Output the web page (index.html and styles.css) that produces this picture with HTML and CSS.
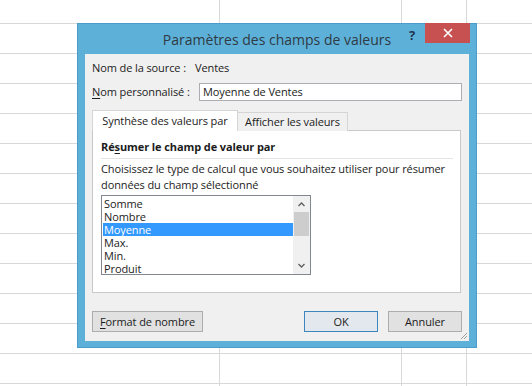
FILE: index.html
```html
<!DOCTYPE html>
<html lang="fr">
<head>
<meta charset="utf-8">
<title>Paramètres des champs de valeurs</title>
<link rel="stylesheet" href="styles.css">
</head>
<body>
<div class="dialog">
  <div class="titlebar">
    <span class="title">Paramètres des champs de valeurs</span>
    <span class="help">?</span>
    <span class="close"><svg width="10" height="10" viewBox="0 0 10 10"><path d="M1 1L9 9M9 1L1 9" stroke="#fff" stroke-width="1.6" fill="none"/></svg></span>
  </div>
  <div class="content">
    <div class="row source"><span class="lbl">Nom de la source :</span><span class="val">Ventes</span></div>
    <div class="row custom"><span class="lbl"><u>N</u>om personnalisé :</span><div class="input">Moyenne de Ventes</div></div>
    <div class="tabs">
      <div class="tab active">Synthèse des valeurs par</div>
      <div class="tab">Afficher les valeurs</div>
    </div>
    <div class="panel">
      <div class="heading">Ré<u>s</u>umer le champ de valeur par</div>
      <p class="desc"><span>Choisissez le type de calcul que vous souhaitez utiliser pour résumer</span><span>données du champ sélectionné</span></p>
      <div class="listbox">
        <ul class="items">
          <li>Somme</li>
          <li>Nombre</li>
          <li class="sel">Moyenne</li>
          <li>Max.</li>
          <li>Min.</li>
          <li>Produit</li>
        </ul>
        <div class="scrollbar">
          <svg class="arrow" width="17" height="16" viewBox="0 0 17 16"><path d="M5.5 10L8.5 7L11.5 10" stroke="#606060" stroke-width="1.4" fill="none"/></svg>
          <div class="thumb"></div>
          <div class="track"></div>
          <svg class="arrow" width="17" height="16" viewBox="0 0 17 16"><path d="M5.5 6L8.5 9L11.5 6" stroke="#606060" stroke-width="1.4" fill="none"/></svg>
        </div>
      </div>
    </div>
    <div class="buttons">
      <button class="btn fmt"><u>F</u>ormat de nombre</button>
      <span class="spacer"></span>
      <button class="btn ok">OK</button>
      <button class="btn cancel">Annuler</button>
    </div>
    <svg class="grip" width="8" height="8" viewBox="0 0 8 8"><path d="M7 1L1 7M7 4L4 7" stroke="#a0a0a0" stroke-width="1" fill="none"/></svg>
  </div>
</div>
</body>
</html>
```

FILE: styles.css
```css
html, body {
  margin: 0;
  padding: 0;
}
body {
  width: 532px;
  height: 386px;
  overflow: hidden;
  background-color: #fff;
  background-image:
    linear-gradient(#d8d8d8, #d8d8d8),
    linear-gradient(#d8d8d8, #d8d8d8),
    linear-gradient(#d8d8d8, #d8d8d8),
    linear-gradient(to bottom, #d8d8d8 0, #d8d8d8 1px, transparent 1px);
  background-size: 1px 100%, 1px 100%, 1px 100%, 100% 30px;
  background-repeat: no-repeat, no-repeat, no-repeat, repeat;
  background-position: 219px 0, 401px 0, 466px 0, 0 23px;
  font-family: "Segoe UI", "Open Sans", "Noto Sans", sans-serif;
  font-size: 11px;
  letter-spacing: -0.1px;
  color: #1b1b1b;
  display: flow-root;
}
u { text-decoration: underline; text-underline-offset: 2px; }

.dialog {
  margin: 23px 0 0 77px;
  width: 400px;
  height: 325px;
  box-sizing: border-box;
  background: #5db1d9;
  border: 1px solid #4a9ccb;
  padding: 0 7px 6px 7px;
  display: flex;
  flex-direction: column;
}
.titlebar {
  height: 30px;
  position: relative;
  display: flex;
  align-items: center;
  justify-content: center;
}
.title {
  font-size: 14px;
  letter-spacing: 0;
  color: #2f3a44;
  margin-top: 1px;
}
.help {
  position: absolute;
  left: 324px;
  top: 2px;
  font-weight: bold;
  font-size: 13px;
  color: #1f3550;
}
.close {
  position: absolute;
  left: 340px;
  top: -1px;
  width: 45px;
  height: 20px;
  background: #c75050;
  display: flex;
  align-items: center;
  justify-content: center;
}
.content {
  flex: 1;
  background: #f0f0f0;
  position: relative;
  display: flex;
  flex-direction: column;
}
.row {
  display: flex;
  align-items: center;
  padding: 0 7px;
  line-height: 16px;
  white-space: nowrap;
}
.source { margin-top: 6px; }
.source .val { margin-left: 9px; }
.custom { margin-top: 7px; }
.input {
  margin-left: auto;
  width: 263px;
  height: 18px;
  box-sizing: border-box;
  border: 1px solid #abadb3;
  background: #fff;
  padding-left: 3px;
  line-height: 16px;
}
.tabs {
  margin: 9px 7px 0 7px;
  display: flex;
  align-items: flex-end;
  height: 21px;
  position: relative;
  z-index: 1;
  margin-bottom: -1px;
  white-space: nowrap;
}
.tab {
  box-sizing: border-box;
  height: 19px;
  border: 1px solid #d5d5d5;
  border-bottom: none;
  background: #f0f0f0;
  line-height: 18px;
  margin-left: -1px;
  width: 111px;
  text-align: center;
}
.tab.active {
  height: 21px;
  background: #fff;
  line-height: 20px;
  margin-left: 0;
  width: 146px;
}
.panel {
  margin: 0 8px 0 7px;
  height: 163px;
  box-sizing: border-box;
  border: 1px solid #c9c9c9;
  background: #fff;
  padding: 8px 7px 0 8px;
}
.heading {
  font-weight: bold;
  line-height: 16px;
  padding-bottom: 3px;
  border-bottom: 1px solid #e3e3e3;
  white-space: nowrap;
}
.desc {
  margin: 2px 0 0 0;
  line-height: 16px;
  white-space: nowrap;
  display: flex;
  flex-direction: column;
}
.listbox {
  margin-top: 2px;
  width: 210px;
  height: 80px;
  box-sizing: border-box;
  border: 1px solid #828790;
  display: flex;
  padding: 1px;
}
.items {
  list-style: none;
  margin: 0;
  padding: 0;
  flex: 1;
}
.items li {
  height: 13px;
  line-height: 13px;
  padding-left: 1px;
}
.items li.sel {
  background: #3399ff;
  color: #fff;
}
.scrollbar {
  width: 17px;
  background: #f0f0f0;
  margin: -1px -1px -1px 0;
  display: flex;
  flex-direction: column;
}
.arrow { display: block; flex: none; }
.thumb {
  height: 24px;
  background: #cdcdcd;
  margin: 0 1px;
}
.track { flex: 1; }
.buttons {
  margin-top: 18px;
  padding: 0 7px;
  display: flex;
  gap: 10px;
}
.spacer { flex: 1; }
.btn {
  font: inherit;
  letter-spacing: inherit;
  color: #1b1b1b;
  height: 21px;
  box-sizing: border-box;
  border: 1px solid #adadad;
  background: #e1e1e1;
  padding: 0;
  text-align: center;
}
.btn.fmt { width: 111px; }
.btn.ok { width: 74px; border-color: #3c86c0; background: #e3e8ee; }
.btn.cancel { width: 74px; }
.grip {
  position: absolute;
  right: 1px;
  bottom: 1px;
}
```
